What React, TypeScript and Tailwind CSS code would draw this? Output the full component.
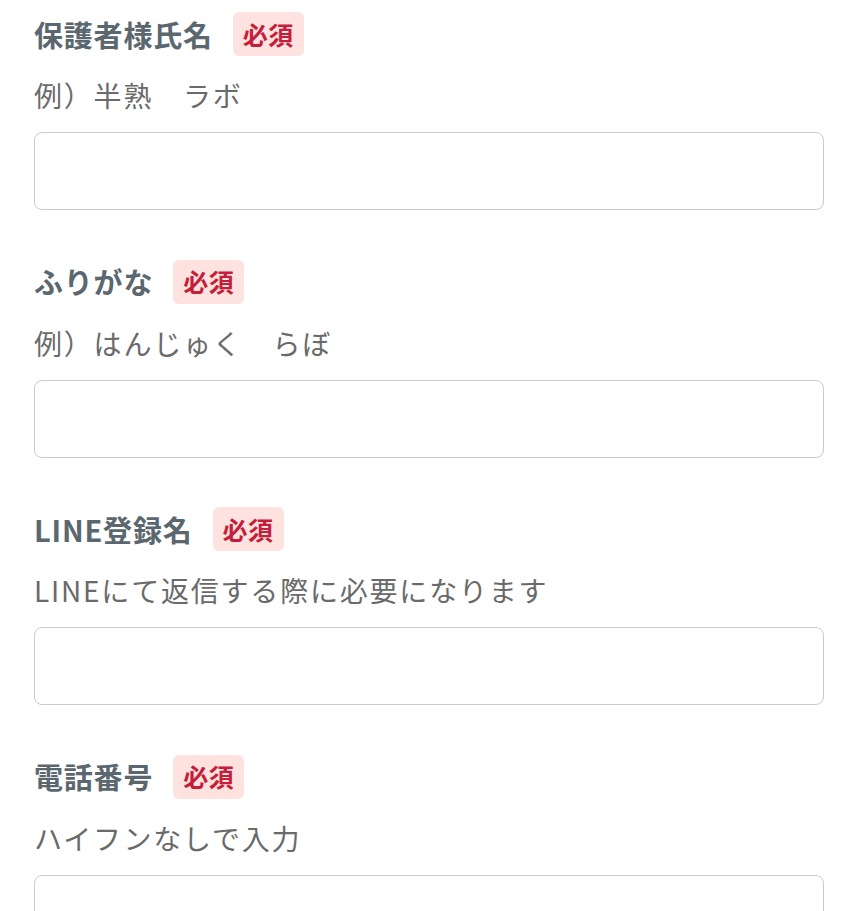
import React from 'react';

type Field = {
  label: string;
  hint: string;
};

const fields: Field[] = [
  { label: '保護者様氏名', hint: '例）半熟　ラボ' },
  { label: 'ふりがな', hint: '例）はんじゅく　らぼ' },
  { label: 'LINE登録名', hint: 'LINEにて返信する際に必要になります' },
  { label: '電話番号', hint: 'ハイフンなしで入力' },
];

const FormField = ({ label, hint }: Field) => {
  return (
    <div className="mb-[49.5px]">
      <div className="flex items-center h-[44px] gap-[20px]">
        <span className="text-[29px] font-bold tracking-[0.8px] text-[#5b676f] leading-none">
          {label}
        </span>
        <span className="h-[44px] px-[10px] flex items-center rounded-md bg-[#fde2e0] text-[#c41e3a] text-[25px] font-bold tracking-[0.5px] leading-none">
          必須
        </span>
      </div>
      <p className="mt-[19px] h-[40px] leading-[40px] text-[28px] tracking-[1.8px] text-[#6a6a6a]">
        {hint}
      </p>
      <input
        type="text"
        className="mt-[17px] block w-full h-[78px] rounded-lg border-[1.5px] border-[#cbcbcb] bg-white px-4 text-[27px] outline-none"
      />
    </div>
  );
};

const App = () => {
  return (
    <main
      className="min-h-screen bg-white px-[34px] pt-[12px] overflow-hidden"
      style={{ fontFamily: '"Noto Sans CJK JP", "Noto Sans", sans-serif' }}
    >
      {fields.map((field, index) => (
        <FormField key={index} label={field.label} hint={field.hint} />
      ))}
    </main>
  );
};

export default App;
